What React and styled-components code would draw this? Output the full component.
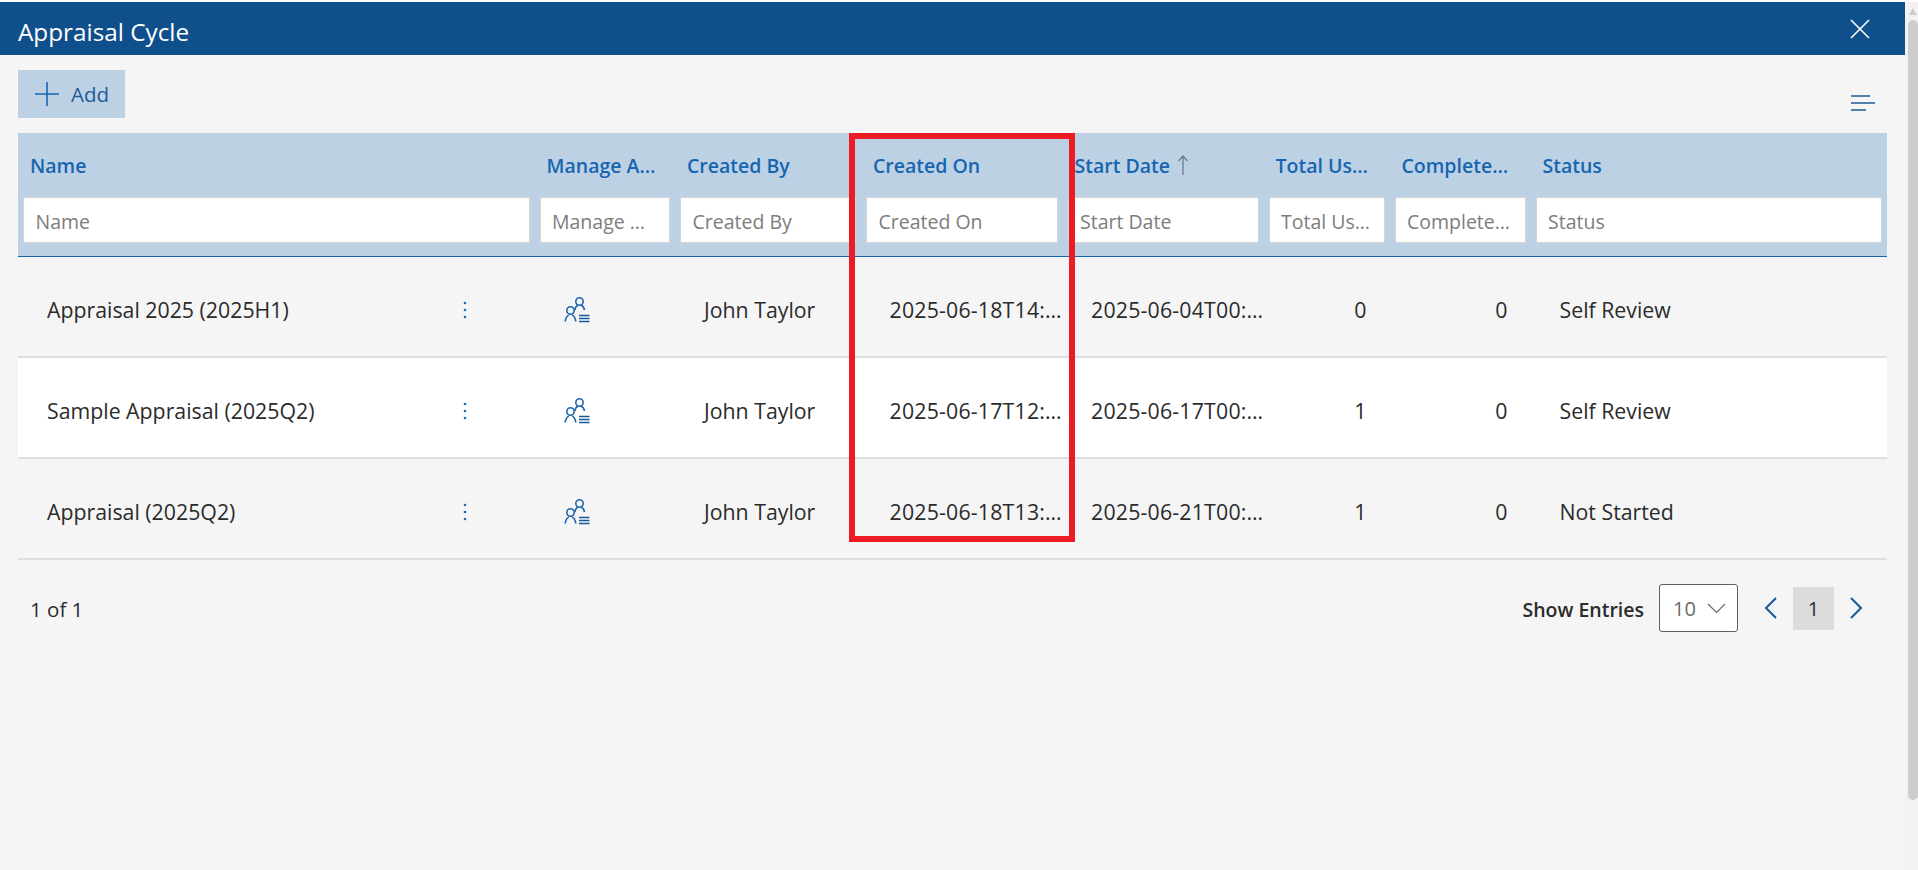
import React from "react";
import styled, { createGlobalStyle } from "styled-components";

const columns = "516.5px 140.5px 186px 201.5px 201px 126px 141px 1fr";

const filters = ["Name", "Manage Appraisal", "Created By", "Created On", "Start Date", "Total Users Count", "Completed Users", "Status"];

const rows = [
  { name: "Appraisal 2025 (2025H1)", createdOn: "2025-06-18T14:22:10", start: "2025-06-04T00:00:00", total: 0, done: 0, status: "Self Review" },
  { name: "Sample Appraisal (2025Q2)", createdOn: "2025-06-17T12:05:41", start: "2025-06-17T00:00:00", total: 1, done: 0, status: "Self Review", white: true },
  { name: "Appraisal (2025Q2)", createdOn: "2025-06-18T13:47:33", start: "2025-06-21T00:00:00", total: 1, done: 0, status: "Not Started" },
];

const Global = createGlobalStyle`
  html, body { margin: 0; padding: 0; height: 100%; overflow: hidden; }
  body { background: #f5f5f5; font-family: "Open Sans", "Noto Sans", sans-serif; color: #2b2b2b; }
  input { font-family: inherit; }
`;

const Page = styled.div`
  position: relative;
  display: flex;
  height: 870px;
  padding-top: 2px;
  box-sizing: border-box;
  background: #fff;
`;

const Main = styled.div`
  width: 1905px;
  height: 868px;
  background: #f5f5f5;
  display: flex;
  flex-direction: column;
`;

const Header = styled.header`
  height: 53px;
  background: #0f4f8b;
  color: #fff;
  display: flex;
  align-items: center;
  justify-content: space-between;
  padding: 0 35px 0 18px;
  font-size: 24.3px;
`;

const Title = styled.span`
  padding-top: 5px;
`;

const Toolbar = styled.div`
  display: flex;
  align-items: flex-start;
  justify-content: space-between;
  margin: 15px 30px 15px 18px;
  height: 48px;
`;

const ColumnsButton = styled.div`
  margin-top: 25px;
  display: flex;
`;

const AddButton = styled.button`
  width: 107px;
  height: 48px;
  border: 0;
  background: #bdd1e5;
  color: #1f5a96;
  display: flex;
  align-items: center;
  gap: 11px;
  padding: 0 0 0 16px;
  font-family: inherit;
  font-size: 20.5px;
`;

const Table = styled.div`
  margin: 0 18px;
`;

const HeadGrid = styled.div`
  display: grid;
  grid-template-columns: ${columns};
  background: #bdd1e5;
  height: 124px;
  border-bottom: 1px solid #1565b0;
  box-sizing: border-box;
`;

const HeadCell = styled.div`
  padding: 0 5px;
  min-width: 0;
`;

const Label = styled.div`
  height: 64px;
  display: flex;
  align-items: center;
  gap: 7px;
  padding: 0 8px 0 7px;
  box-sizing: border-box;
  color: #1565b0;
  font-size: 19.5px;
  font-weight: 600;
  white-space: nowrap;
  overflow: hidden;
`;

const LabelText = styled.span`
  overflow: hidden;
  text-overflow: ellipsis;
`;

const Filter = styled.input`
  display: block;
  width: 100%;
  height: 46px;
  box-sizing: border-box;
  border: 1px solid #d6d6d6;
  border-radius: 2px;
  background: #fff;
  padding: 2px 13px 0 11.5px;
  font-size: 19.5px;
  text-overflow: ellipsis;
  &::placeholder { color: #7d7d7d; opacity: 1; }
`;

const Row = styled.div`
  display: grid;
  grid-template-columns: ${columns};
  height: 101px;
  padding-top: 5px;
  align-items: center;
  box-sizing: border-box;
  border-bottom: 2px solid #dedede;
  background: ${(p) => (p.$white ? "#fff" : "#f5f5f5")};
  font-size: 21.3px;
`;

const Cell = styled.div`
  min-width: 0;
  padding: ${(p) => (p.$right ? "0 23px 0 0" : "0 1px 0 29px")};
  text-align: ${(p) => (p.$right ? "right" : "left")};
  white-space: nowrap;
  overflow: hidden;
  text-overflow: ellipsis;
`;

const DateCell = styled(Cell)`
  padding: 0 0 0 28.5px;
  letter-spacing: 0.2px;
`;

const NameCell = styled.div`
  display: flex;
  align-items: center;
  justify-content: space-between;
  padding: 0 68px 0 29px;
`;

const Kebab = styled.div`
  display: flex;
  margin-top: 2px;
`;

const IconCell = styled.div`
  padding: 2px 0 0 29px;
  display: flex;
`;

const Footer = styled.div`
  display: flex;
  align-items: center;
  justify-content: space-between;
  margin: 24px 42px 0 31px;
  height: 48px;
  font-size: 20px;
`;

const PageCount = styled.span`
  padding-top: 2px;
  font-size: 20.5px;
  margin-left: -1px;
`;

const Pager = styled.div`
  display: flex;
  align-items: center;
`;

const EntriesLabel = styled.span`
  font-weight: 600;
  font-size: 19.5px;
  padding-top: 2px;
  margin-right: 15px;
`;

const Select = styled.div`
  width: 79px;
  height: 48px;
  box-sizing: border-box;
  border: 1px solid #5f5f5f;
  border-radius: 3px;
  background: #fff;
  display: flex;
  align-items: center;
  justify-content: space-between;
  padding: 0 11px 0 13px;
  margin-right: 26px;
  color: #6a6a6a;
`;

const PageNumber = styled.div`
  width: 41px;
  height: 43px;
  background: #dcdcdc;
  display: flex;
  align-items: center;
  justify-content: center;
  margin: 0 15px;
`;

const Scrollbar = styled.div`
  width: 13px;
  background: #f4f2f1;
  position: relative;
`;

const Thumb = styled.div`
  position: absolute;
  top: 18px;
  right: 0;
  width: 10px;
  height: 780px;
  border-radius: 5px;
  background: #cdcdcd;
`;

const ScrollArrow = styled.div`
  position: absolute;
  top: 6px;
  right: 1px;
  width: 0;
  height: 0;
  border-left: 4px solid transparent;
  border-right: 4px solid transparent;
  border-bottom: 7px solid #cdcdcd;
`;

const Highlight = styled.div`
  position: absolute;
  left: 849px;
  top: 133px;
  width: 226px;
  height: 409px;
  box-sizing: border-box;
  border: 6px solid #ed1c24;
  pointer-events: none;
`;

const CloseIcon = () => (
  <svg width="20" height="20" viewBox="0 0 20 20" fill="none" stroke="#fff" strokeWidth="1.6">
    <path d="M1 1l18 18M19 1L1 19" />
  </svg>
);

const PlusIcon = () => (
  <svg width="26" height="26" viewBox="0 0 26 26" fill="none" stroke="#1565b0" strokeWidth="1.6">
    <path d="M13 1v24M1 13h24" />
  </svg>
);

const ColumnsIcon = () => (
  <svg width="24" height="16" viewBox="0 0 24 16" fill="none" stroke="#1f5a96" strokeWidth="1.6">
    <path d="M0 1h19M0 8h24M0 15h15" />
  </svg>
);

const SortArrow = () => (
  <svg width="12" height="20" viewBox="0 0 12 20" fill="none" stroke="#6f7a85" strokeWidth="1.3">
    <path d="M6 20V1M1.5 6L6 1l4.5 5" />
  </svg>
);

const KebabIcon = () => (
  <svg width="4" height="20" viewBox="0 0 4 20" fill="#1f6bb5">
    <circle cx="2" cy="3" r="1.3" />
    <circle cx="2" cy="10" r="1.3" />
    <circle cx="2" cy="17" r="1.3" />
  </svg>
);

const ManageIcon = () => (
  <svg width="26" height="26" viewBox="0 0 26 26" fill="none" stroke="#1a66ad" strokeWidth="1.6">
    <circle cx="15.5" cy="4.5" r="3.7" />
    <path d="M10.8 13c.4-2.3 1.8-4.2 3-4.7M17.2 8.3c1.6.6 2.9 2.4 3.3 4.7" />
    <circle cx="6.5" cy="13.5" r="3.7" />
    <path d="M1.2 24.5c.4-3 2-5.6 3.6-6.4M8.2 18.1c1.6.8 3.2 3.4 3.6 6.4" />
    <path d="M15 18.5h10.500M15 21.5h10.500M15 24.5h10.500" stroke="#175a9a" strokeWidth="1.5" />
  </svg>
);

const ChevronDown = () => (
  <svg width="19" height="11" viewBox="0 0 19 11" fill="none" stroke="#5f6b78" strokeWidth="1.2">
    <path d="M1 1l8.5 8.5L18 1" />
  </svg>
);

const ChevronIcon = ({ flip }) => (
  <svg width="14" height="22" viewBox="0 0 14 22" fill="none" stroke="#0f5a9c" strokeWidth="2">
    <path d={flip ? "M2 1l10 10L2 21" : "M12 1L2 11l10 10"} />
  </svg>
);

export default function App() {
  return (
    <Page>
      <Global />
      <Main>
        <Header>
          <Title>Appraisal Cycle</Title>
          <CloseIcon />
        </Header>
        <Toolbar>
          <AddButton>
            <PlusIcon />
            Add
          </AddButton>
          <ColumnsButton>
            <ColumnsIcon />
          </ColumnsButton>
        </Toolbar>
        <Table>
          <HeadGrid>
            {filters.map((title) => (
              <HeadCell key={title}>
                <Label>
                  <LabelText>{title}</LabelText>
                  {title === "Start Date" && <SortArrow />}
                </Label>
                <Filter placeholder={title} readOnly />
              </HeadCell>
            ))}
          </HeadGrid>
          {rows.map((row) => (
            <Row key={row.name} $white={row.white}>
              <NameCell>
                <span>{row.name}</span>
                <Kebab>
                  <KebabIcon />
                </Kebab>
              </NameCell>
              <IconCell>
                <ManageIcon />
              </IconCell>
              <Cell>John Taylor</Cell>
              <DateCell>{row.createdOn}</DateCell>
              <DateCell>{row.start}</DateCell>
              <Cell $right>{row.total}</Cell>
              <Cell $right>{row.done}</Cell>
              <Cell>{row.status}</Cell>
            </Row>
          ))}
        </Table>
        <Footer>
          <PageCount>1 of 1</PageCount>
          <Pager>
            <EntriesLabel>Show Entries</EntriesLabel>
            <Select>
              10
              <ChevronDown />
            </Select>
            <ChevronIcon />
            <PageNumber>1</PageNumber>
            <ChevronIcon flip />
          </Pager>
        </Footer>
      </Main>
      <Scrollbar>
        <ScrollArrow />
        <Thumb />
      </Scrollbar>
      <Highlight />
    </Page>
  );
}
